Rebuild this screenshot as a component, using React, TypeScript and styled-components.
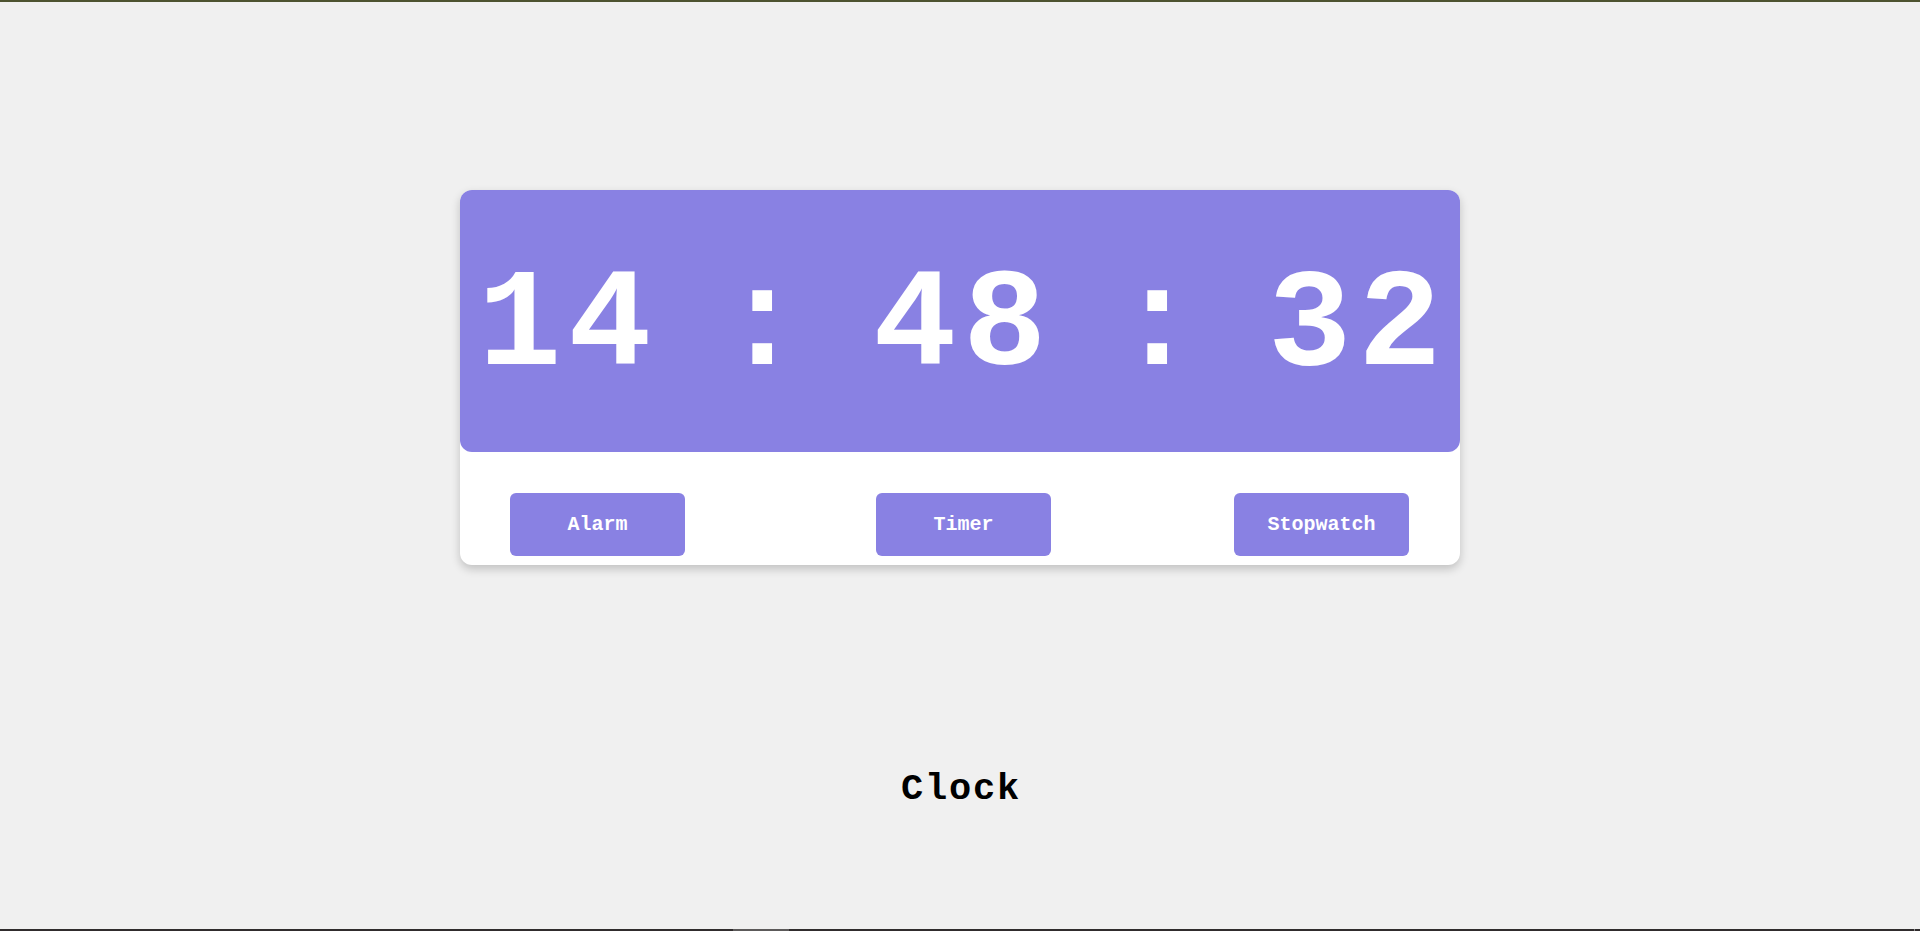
import React from 'react';
import styled, { createGlobalStyle } from 'styled-components';

const GlobalStyle = createGlobalStyle`
  * { box-sizing: border-box; }
  body {
    margin: 0;
    background: #f0f0f0;
    font-family: 'Courier New', 'Liberation Mono', monospace;
    overflow: hidden;
  }
`;

const Page = styled.div`
  display: flex;
  flex-direction: column;
  align-items: center;
  height: 931px;
`;

const TopEdge = styled.div`
  align-self: stretch;
  height: 2px;
  background: #4d5330;
`;

const Card = styled.main`
  width: 1000px;
  height: 375px;
  margin-top: 188px;
  background: #fff;
  border-radius: 12px;
  box-shadow: 0 4px 10px rgba(0, 0, 0, 0.2);
`;

const Display = styled.div`
  display: flex;
  justify-content: space-between;
  align-items: center;
  height: 262px;
  padding: 12px 12px 0 18px;
  border-radius: 12px;
  background: #8981e3;
  color: #fff;
  font-size: 139px;
  font-weight: bold;
  line-height: 170px;
  letter-spacing: 6.6px;
`;

const Actions = styled.div`
  display: flex;
  justify-content: space-between;
  padding: 41px 51px 0 50px;
`;

const ActionButton = styled.button<{ $shift?: number }>`
  width: 175px;
  height: 63px;
  padding: 0;
  margin-left: ${({ $shift = 0 }) => $shift}px;
  border: none;
  border-radius: 6px;
  background: #8981e3;
  color: #fff;
  font-family: inherit;
  font-size: 20px;
  font-weight: bold;
  line-height: 23px;
`;

const Title = styled.h1`
  margin: 201px 0 0;
  padding-left: 2px;
  color: #000;
  font-size: 37px;
  line-height: 46px;
  letter-spacing: 1.8px;
`;

const BottomEdge = styled.div`
  display: flex;
  align-self: stretch;
  height: 2px;
  margin-top: auto;
  padding-left: 733px;
  padding-right: 5px;
  justify-content: space-between;
  background: #302c2d;
`;

const EdgeMark = styled.div<{ $width: number; $color: string }>`
  width: ${({ $width }) => $width}px;
  background: ${({ $color }) => $color};
`;

export default function App() {
  return (
    <Page>
      <GlobalStyle />
      <TopEdge />
      <Card>
        <Display>
          <span>14</span>
          <span>:</span>
          <span>48</span>
          <span>:</span>
          <span>32</span>
        </Display>
        <Actions>
          <ActionButton>Alarm</ActionButton>
          <ActionButton $shift={8}>Timer</ActionButton>
          <ActionButton>Stopwatch</ActionButton>
        </Actions>
      </Card>
      <Title>Clock</Title>
      <BottomEdge>
        <EdgeMark $width={56} $color="#5c5a5a" />
        <EdgeMark $width={1} $color="#8b898a" />
      </BottomEdge>
    </Page>
  );
}
